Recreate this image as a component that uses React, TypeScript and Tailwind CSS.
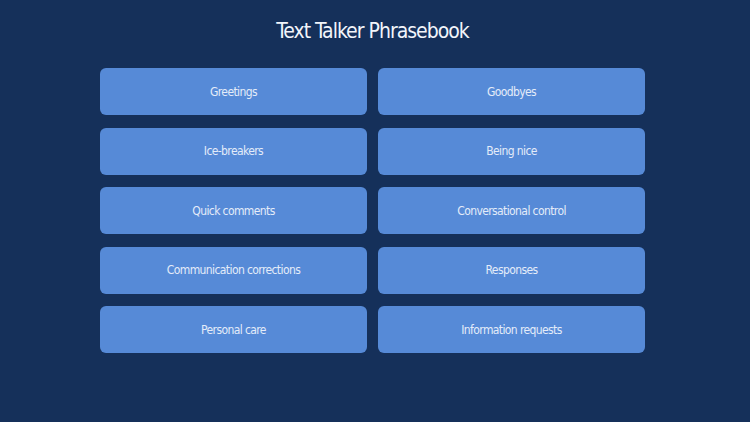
import React from "react";

const items = [
  "Greetings",
  "Goodbyes",
  "Ice-breakers",
  "Being nice",
  "Quick comments",
  "Conversational control",
  "Communication corrections",
  "Responses",
  "Personal care",
  "Information requests",
];

export default function App() {
  return (
    <div
      className="w-[750px] h-[422px] bg-[#15305a] flex flex-col items-start pl-[100px]"
      style={{ fontFamily: '"DejaVu Sans Condensed", "DejaVu Sans", sans-serif' }}
    >
      <div className="w-[545px] flex justify-center">
        <h1 className="mt-[17px] h-[28px] text-[21px] leading-[28px] tracking-[-1px] text-[#f2f5fb]">
          Text Talker Phrasebook
        </h1>
      </div>
      <div className="mt-[23px] grid grid-cols-[267px_267px] gap-x-[11px] gap-y-[12.5px]">
        {items.map((t) => (
          <div
            key={t}
            className="h-[47px] rounded-[6px] bg-[#568ad7] flex items-center justify-center text-[12px] tracking-[-0.6px] text-[#e4ecf9]"
          >
            {t}
          </div>
        ))}
      </div>
    </div>
  );
}
